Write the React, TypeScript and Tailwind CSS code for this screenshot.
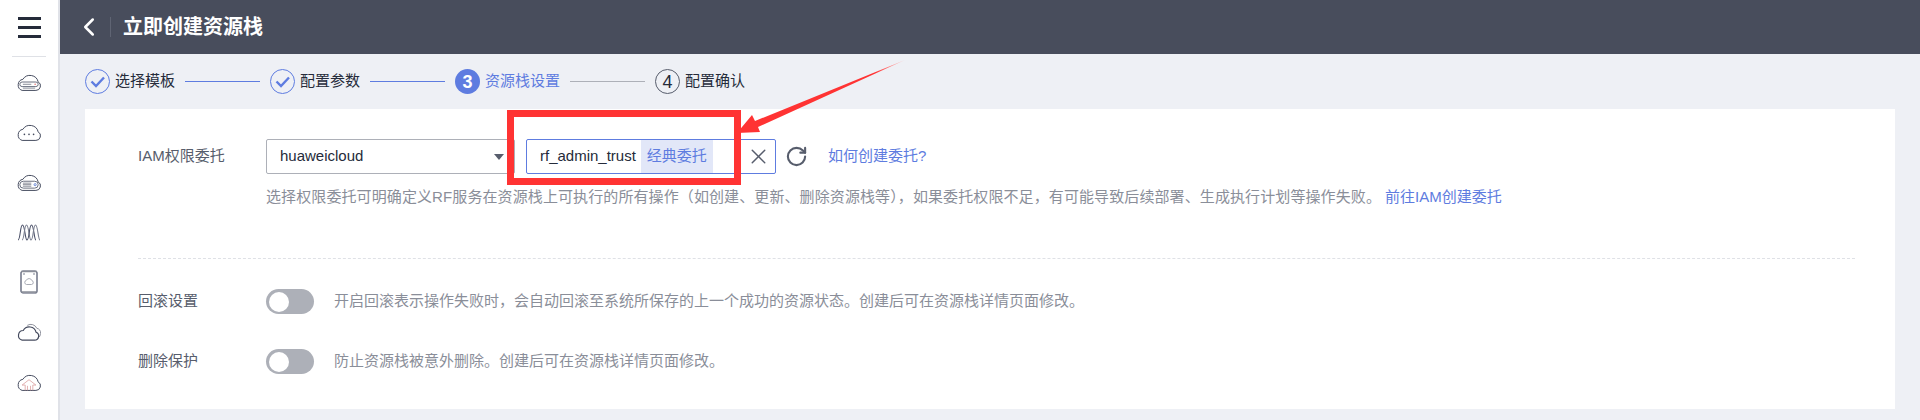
import { ChevronLeft, RotateCw, X } from "lucide-react";

const FONT = "font-['Liberation_Sans','Noto_Sans_CJK_SC',sans-serif]";

function CloudDisk() {
  return (
    <svg width="26" height="20" viewBox="0 0 34 26" fill="none" stroke="#454b5e" strokeWidth="1.3">
      <path d="M8 24h18a6 6 0 0 0 3-11.200A11 11 0 0 0 9 9.500 7.500 7.500 0 0 0 8 24z" />
      <rect x="5" y="13" width="24" height="6" rx="3" stroke="#6b7080" />
      <path d="M9 16h11M9 21h16" stroke="#8a8e99" />
      <circle cx="25" cy="16" r="1" fill="#e26d6d" stroke="none" />
    </svg>
  );
}

function CloudDots() {
  return (
    <svg width="26" height="20" viewBox="0 0 34 26" fill="none" stroke="#454b5e" strokeWidth="1.3">
      <path d="M8 24h18a6 6 0 0 0 3-11.200A11 11 0 0 0 9 9.500 7.500 7.500 0 0 0 8 24z" />
      <circle cx="11" cy="16" r="1.100" fill="#454b5e" stroke="none" />
      <circle cx="17" cy="16" r="1.100" fill="#454b5e" stroke="none" />
      <circle cx="23" cy="16" r="1.100" fill="#454b5e" stroke="none" />
    </svg>
  );
}

function CloudServer() {
  return (
    <svg width="26" height="20" viewBox="0 0 34 26" fill="none" stroke="#454b5e" strokeWidth="1.3">
      <path d="M8 24h18a6 6 0 0 0 3-11.200A11 11 0 0 0 9 9.500 7.500 7.500 0 0 0 8 24z" />
      <rect x="5" y="12" width="24" height="9" rx="4.500" stroke="#6b7080" />
      <path d="M9 14.500h11M9 16.500h11M9 18.500h11" stroke="#8a8e99" />
      <circle cx="25" cy="16.500" r="1.400" stroke="#6c8ad8" />
    </svg>
  );
}

function Waves() {
  return (
    <svg width="24" height="18" viewBox="0 0 24 18" fill="none" stroke="#4a5068" strokeWidth="1.100">
      <path d="M1 17C3.500 17 3 2 5.500 2S8 17 10 17" />
      <path d="M5 17C7.500 17 7 2 9.500 2S12 17 14 17" stroke="#7a7f90" />
      <path d="M10 17C12.500 17 12 2 14.500 2S17 17 19 17" />
      <path d="M14 17C16.500 17 16 2 18.500 2S21 17 23 17" stroke="#7a7f90" />
    </svg>
  );
}

function PhoneCloud() {
  return (
    <svg width="18" height="24" viewBox="0 0 18 24" fill="none" stroke="#4a5068" strokeWidth="1.200">
      <rect x="1" y="1" width="16" height="22" rx="2" />
      <path d="M1 1.500h16M1 22h16" stroke="#8a8e99" strokeWidth="1.500" />
      <circle cx="4" cy="4" r="0.700" fill="#4a5068" stroke="none" />
      <circle cx="14" cy="4" r="0.700" fill="#4a5068" stroke="none" />
      <path d="M6.500 14.500h5a2 2 0 0 0 .400-3.900 3 3 0 0 0-5.600-.200 2.100 2.100 0 0 0 .200 4.100z" stroke="#a8abb5" strokeWidth="1" />
    </svg>
  );
}

function DoubleCloud() {
  return (
    <svg width="25" height="20" viewBox="0 0 34 26" fill="none" strokeWidth="1.300">
      <path d="M14 4a9 9 0 0 1 13 4 6 6 0 0 1 5 7 6 6 0 0 1-4 6" stroke="#8a8e99" />
      <path d="M7 24h17a5.500 5.500 0 0 0 2-10.600A9.500 9.500 0 0 0 8.500 11 6.600 6.600 0 0 0 7 24z" stroke="#454b5e" strokeWidth="1.600" />
    </svg>
  );
}

function CloudUpload() {
  return (
    <svg width="26" height="20" viewBox="0 0 34 26" fill="none" stroke="#454b5e" strokeWidth="1.300">
      <path d="M8 24h18a6 6 0 0 0 3-11.200A11 11 0 0 0 9 9.500 7.500 7.500 0 0 0 8 24z" />
      <path d="M12 24v-7H8l9-7 9 7h-4v7M15 24v-6M19 24v-6" stroke="#d99a9a" strokeWidth="1" />
    </svg>
  );
}

const SIDE_ICONS = [CloudDisk, CloudDots, CloudServer, Waves, PhoneCloud, DoubleCloud, CloudUpload];

function Sidebar() {
  return (
    <aside className="flex w-[60px] shrink-0 flex-col items-center border-r-2 border-[#e0e2e8] bg-white pt-[17px]">
      <div className="flex w-[23px] flex-col gap-[6.500px]">
        <div className="h-[2.500px] bg-[#252b3a]" />
        <div className="h-[2.500px] bg-[#252b3a]" />
        <div className="h-[2.500px] bg-[#252b3a]" />
      </div>
      <div className="mt-[18px] h-px w-[34px] bg-[#dfe1e6]" />
      <div className="flex flex-col items-center">
        {SIDE_ICONS.map((Icon, i) => (
          <div key={i} className="flex h-[50px] w-full items-center justify-center">
            <Icon />
          </div>
        ))}
      </div>
    </aside>
  );
}

function CheckCircle() {
  return (
    <svg width="25" height="25" viewBox="0 0 25 25" fill="none">
      <circle cx="12.500" cy="12.500" r="12" stroke="#5e7ce0" />
      <path d="M6.500 12.500l4.500 4.500 8-8.500" stroke="#5e7ce0" strokeWidth="2.400" />
    </svg>
  );
}

function Steps() {
  return (
    <div className="flex h-[55px] items-center pl-[25px] text-[15px]">
      <CheckCircle />
      <span className="ml-[5px] text-[#252b3a]">选择模板</span>
      <div className="ml-[10px] h-px w-[75px] bg-[#5e7ce0]" />
      <div className="ml-[10px]">
        <CheckCircle />
      </div>
      <span className="ml-[5px] text-[#252b3a]">配置参数</span>
      <div className="ml-[10px] h-px w-[75px] bg-[#5e7ce0]" />
      <div className="ml-[10px] flex h-[25px] w-[25px] items-center justify-center rounded-full bg-[#5e7ce0] text-lg font-bold text-white">
        3
      </div>
      <span className="ml-[5px] text-[#5e7ce0]">资源栈设置</span>
      <div className="ml-[10px] h-px w-[75px] bg-[#adb0b8]" />
      <div className="ml-[10px] flex h-[25px] w-[25px] items-center justify-center rounded-full border border-[#575d6c] text-lg text-[#252b3a]">
        4
      </div>
      <span className="ml-[5px] text-[#252b3a]">配置确认</span>
    </div>
  );
}

function SwitchRow({ label, text }: { label: string; text: string }) {
  return (
    <div className="flex h-[25px] items-center">
      <span className="w-[128px] text-[#575d6c]">{label}</span>
      <div className="flex h-[25px] w-[48px] items-center rounded-full bg-[#adb0b8] pl-[3px]">
        <div className="h-[20px] w-[20px] rounded-full bg-white" />
      </div>
      <span className="ml-[20px] text-[#8a8e99]">{text}</span>
    </div>
  );
}

function Card() {
  return (
    <div className="mr-[25px] ml-[25px] h-[300px] bg-white pt-[30px] pr-[40px] pl-[53px] text-[15px]">
      <div className="flex h-[35px] items-center">
        <span className="w-[128px] text-[#575d6c]">IAM权限委托</span>
        <div className="flex h-[35px] w-[249px] items-center justify-between rounded-[2px] border border-[#adb0b8] pr-[10px] pl-[13px] text-[#252b3a]">
          <span>huaweicloud</span>
          <div className="h-0 w-0 border-x-[5px] border-t-[6px] border-x-transparent border-t-[#575d6c]" />
        </div>
        <div className="ml-[11px] flex h-[35px] w-[250px] items-center rounded-[2px] border border-[#5e7ce0] pr-[4px] pl-[13px] text-[#252b3a]">
          <span>rf_admin_trust</span>
          <span className="ml-[5px] flex h-[33px] w-[72px] items-center justify-center bg-[#e2e7f8] text-[#5e7ce0]">
            经典委托
          </span>
          <X size={25} strokeWidth={1.400} className="ml-auto text-[#575d6c]" />
        </div>
        <RotateCw size={23} strokeWidth={2.200} className="ml-[9px] text-[#575d6c]" />
        <span className="ml-[20px] text-[#5e7ce0]">如何创建委托?</span>
      </div>
      <p className="mt-[13px] pl-[128px] leading-[20px] text-[#8a8e99]">
        <span className="tracking-[0.1px]">
          选择权限委托可明确定义RF服务在资源栈上可执行的所有操作（如创建、更新、删除资源栈等），如果委托权限不足，有可能导致后续部署、生成执行计划等操作失败。
        </span>
        <span className="ml-[4px] text-[#5e7ce0]">前往IAM创建委托</span>
      </p>
      <div className="mt-[51px] border-t border-dashed border-[#dfe1e6]" />
      <div className="mt-[30px] flex flex-col gap-[35px]">
        <SwitchRow label="回滚设置" text="开启回滚表示操作失败时，会自动回滚至系统所保存的上一个成功的资源状态。创建后可在资源栈详情页面修改。" />
        <SwitchRow label="删除保护" text="防止资源栈被意外删除。创建后可在资源栈详情页面修改。" />
      </div>
    </div>
  );
}

export default function App() {
  return (
    <div className={`relative flex h-[420px] w-[1920px] overflow-hidden bg-[#eef0f5] ${FONT}`}>
      <Sidebar />
      <main className="min-w-0 flex-1">
        <header className="flex h-[54px] items-center bg-[#484d5c] pl-[14px] text-white">
          <ChevronLeft size={30} strokeWidth={2} />
          <div className="ml-[6px] h-[20px] w-px bg-[#5f6473]" />
          <h1 className="ml-[12px] text-xl font-bold">立即创建资源栈</h1>
        </header>
        <Steps />
        <Card />
      </main>

      {/* red annotation drawn over the screenshot */}
      <div className="absolute top-[110px] left-[507px] h-[75px] w-[234px] border-[7px] border-[#ff3333]" />
      <svg className="absolute top-[55px] left-[735px]" width="180" height="85" viewBox="0 0 180 85">
        <defs>
          <linearGradient id="arrowFade" gradientUnits="userSpaceOnUse" x1="20" y1="70" x2="170" y2="5">
            <stop offset="0.8" stopColor="#ff3333" />
            <stop offset="1" stopColor="#ffc4c4" />
          </linearGradient>
        </defs>
        <path d="M2 78 L17 60 L20 66 L170 5 L23 72 L25 77 Z" fill="url(#arrowFade)" />
      </svg>
    </div>
  );
}
